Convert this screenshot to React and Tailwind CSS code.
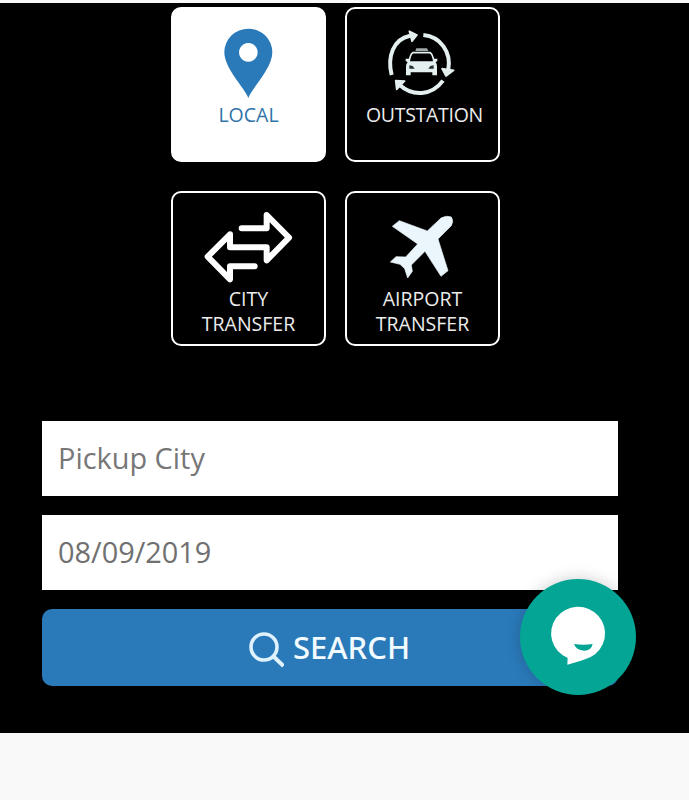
import { useState } from "react";

function PinIcon() {
    return (
        <svg viewBox="24 27 453 279" className="block h-[93px] w-[151px]">
            <path
                d="M250 294 C238 262 178 206 178 157 A72 71 0 0 1 322 157 C322 206 262 262 250 294 Z M250 129 a28 28 0 1 0 0.1 0 Z"
                fill="#2a7aba"
                fillRule="evenodd"
            />
        </svg>
    );
}

function TaxiIcon() {
    return (
        <svg viewBox="21 27 453 279" className="block h-[93px] w-[151px]">
            <g fill="none" stroke="#e4efef" strokeWidth="12">
                <path d="M155 225 C141 170 160 117 210 107" />
                <path d="M250 105 C302 110 334 156 325 208" />
                <path d="M309 242 C275 288 218 290 180 256" />
            </g>
            <g fill="#e4efef" stroke="#e4efef" strokeLinejoin="round">
                <g strokeWidth="5">
                    <path d="M208 94 L231 105 L216 124 Z" />
                    <path d="M306 206 L341 211 L318 228 Z" />
                    <path d="M167 242 L194 243 L170 268 Z" />
                </g>
                <path
                    d="M226 153 L229 145 H261 L265 153 Z"
                    stroke="none"
                    opacity="0.7"
                />
                <path
                    d="M218 158 Q211 162 207 186 H282 Q278 162 271 158 Z"
                    fill="#000"
                    strokeWidth="5"
                />
                <path
                    d="M197 176 H207 V186 H282 V176 H292 V183 L287 187 Q291 192 291 199 V226 H277 V217 H212 V226 H198 V199 Q198 192 203 187 L197 183 Z"
                    stroke="none"
                />
            </g>
            <path
                d="M208 196 L218 198 L224 206 H208 Z M281 196 L271 198 L265 206 H281 Z"
                fill="#263034"
            />
        </svg>
    );
}

function ArrowsIcon() {
    return (
        <svg viewBox="24 24 453 279" className="block h-[93px] w-[151px]">
            <path
                d="M230 130 H305 V90 L372 158 L305 226 V187 H195 V148 L128 215 L195 283 V244 H269"
                fill="none"
                stroke="#fff"
                strokeWidth="18"
                strokeLinecap="round"
                strokeLinejoin="round"
            />
        </svg>
    );
}

function PlaneIcon() {
    return (
        <svg viewBox="21 24 453 279" className="block h-[93px] w-[151px]">
            <path
                d="M157 124 L178 107 L262 138 L303 99 Q319 90 334 96 Q342 108 334 122 L294 162 L324 257 L303 274 L255 199 L214 240 L217 259 L203 279 L194 251 L180 238 L151 231 L168 215 L197 216 L233 177 Z"
                fill="#eaf6fb"
                stroke="#eaf6fb"
                strokeWidth="2"
                strokeLinejoin="round"
            />
        </svg>
    );
}

const tripTypes = [
    { id: "local", label: "LOCAL", icon: PinIcon },
    { id: "outstation", label: "OUTSTATION", icon: TaxiIcon },
    { id: "city", label: "CITY TRANSFER", icon: ArrowsIcon },
    { id: "airport", label: "AIRPORT TRANSFER", icon: PlaneIcon },
];

export default function App() {
    const [tripType, setTripType] = useState("local");
    const [city, setCity] = useState("");
    const [date, setDate] = useState("08/09/2019");

    return (
        <div className="h-[800px] w-[689px] overflow-hidden bg-[#f9f9f9] pt-[3px] font-['Open_Sans',sans-serif]">
            <div className="h-[730px] bg-black pt-[4px]">
                <div className="ml-[171px] grid w-[329px] grid-cols-[155px_155px] gap-x-[19px] gap-y-[29px]">
                    {tripTypes.map((type) => {
                        const Icon = type.icon;

                        return (
                            <button
                                key={type.id}
                                onClick={() => setTripType(type.id)}
                                className={
                                    tripType === type.id
                                        ? "flex h-[155px] flex-col items-center rounded-[10px] border-2 border-white bg-white text-[19.5px] leading-[25px] text-[#2f73a8]"
                                        : "flex h-[155px] flex-col items-center rounded-[10px] border-2 border-white bg-black text-[19.5px] leading-[25px] text-[#ececec]"
                                }
                            >
                                <Icon />
                                <span
                                    className={
                                        type.id === "outstation"
                                            ? "w-[113px] tracking-[-0.3px]"
                                            : "w-[115px]"
                                    }
                                >
                                    {type.label}
                                </span>
                            </button>
                        );
                    })}
                </div>

                <div className="ml-[42px] mt-[75px] flex w-[576px] flex-col gap-[19px]">
                    <input
                        value={city}
                        onChange={(e) => setCity(e.target.value)}
                        placeholder="Pickup City"
                        className="h-[75px] bg-white px-4 pb-0.5 text-[28.9px] text-[#777] outline-none placeholder:text-[#777]"
                    />
                    <input
                        value={date}
                        onChange={(e) => setDate(e.target.value)}
                        className="h-[75px] bg-white px-4 pb-0.5 text-[28.9px] text-[#707070] outline-none"
                    />
                    <div className="relative">
                        <button className="flex h-[77px] w-full items-center rounded-[10px] bg-[#2a7aba] pl-[206px] font-['Noto_Sans',sans-serif] text-[31px] font-medium text-[#f2fbff]">
                            <svg
                                viewBox="0 0 36 36"
                                className="mr-[9px] mt-[5px] h-9 w-9"
                                fill="none"
                                stroke="#dff2fc"
                                strokeWidth="3.6"
                            >
                                <circle cx="16" cy="15" r="13" />
                                <path d="M25 24 L35.5 34" strokeWidth="4" />
                            </svg>
                            SEARCH
                        </button>
                        <button
                            aria-label="Chat"
                            className="absolute -right-[18px] -top-[30px] h-[116px] w-[116px] rounded-full bg-[#04a594] shadow-[0_0_16px_rgba(0,0,0,0.2)]"
                        >
                            <svg
                                viewBox="64 58 348 348"
                                className="h-full w-full"
                            >
                                <path
                                    d="M207 295 A81 80 0 1 1 276 292 Q248 304 206 315 Z"
                                    fill="#fff"
                                />
                                <path
                                    d="M226 253 Q254 257 282 253 Q278 273 256 273 Q233 272 226 253 Z"
                                    fill="#04a594"
                                />
                            </svg>
                        </button>
                    </div>
                </div>
            </div>
        </div>
    );
}
